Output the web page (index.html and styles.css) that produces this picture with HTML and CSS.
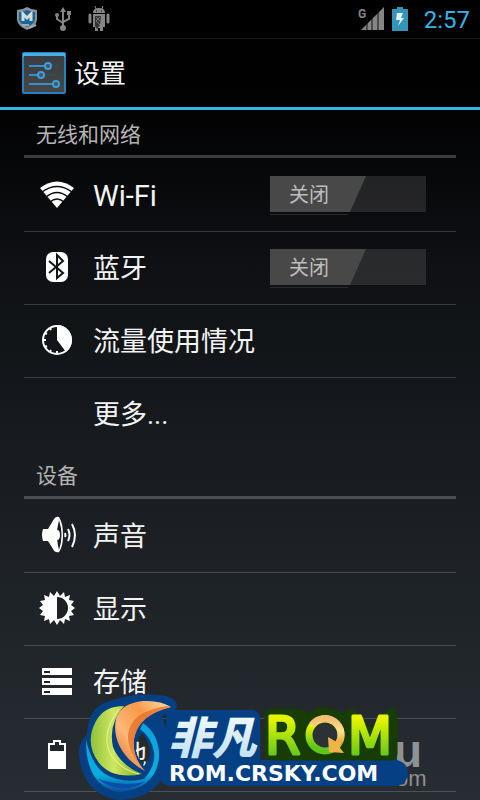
FILE: index.html
```html
<!DOCTYPE html>
<html lang="zh-CN">
<head>
<meta charset="utf-8">
<meta name="viewport" content="width=device-width, initial-scale=1">
<title>设置</title>
<link rel="stylesheet" href="styles.css">
</head>
<body>
<div class="screen">
  <div class="status">
    <div class="notices">
      <svg width="22" height="24" viewBox="0 0 22 24">
        <path d="M1 3Q6 3 11 0Q16 3 21 3V13Q20 19 11 23Q2 19 1 13Z" fill="#8d9296"/>
        <path d="M3 5Q7 5 11 3Q15 5 19 5V13Q18 17 11 20Q4 17 3 13Z" fill="#17669b"/>
        <path d="M7 14V7L11 11L15 7V14" fill="none" stroke="#d5dadd" stroke-width="3"/>
        <path d="M6 18H13M13 21L20 18" stroke="#a3a8ab" stroke-width="2"/>
      </svg>
      <svg width="16" height="24" viewBox="0 0 16 24" fill="none" stroke="#858585" stroke-width="2">
        <path d="M8 3V20M2 8V12L8 16M14 7V12L8 15"/>
        <path d="M5 5L8 0L11 5Z" fill="#858585" stroke="none"/>
        <circle cx="8" cy="21" r="3" fill="#858585" stroke="none"/>
        <circle cx="2" cy="8" r="2" fill="#858585" stroke="none"/>
        <path d="M12 4H16V8H12Z" fill="#858585" stroke="none"/>
      </svg>
      <svg width="22" height="26" viewBox="0 0 22 26">
        <path d="M5 7Q5 2 11 2T17 7ZM5 8H17V21H15V25H12V22H10V25H7V21H5Z" fill="#858585"/>
        <path d="M7 0L8 3M15 0L14 3" stroke="#858585"/>
        <path d="M2 9V16M20 9V16" stroke="#858585" stroke-width="3" stroke-linecap="round"/>
        <path d="M8 5H9M13 5H14" stroke="#111" stroke-width="1"/>
        <path d="M7 10H13L12 19L9 23L7 20Z" fill="#343434"/>
        <path d="M8 11L12 15M8 15L12 19M12 11L8 15" stroke="#777"/>
      </svg>
    </div>
    <div class="system">
      <svg width="26" height="24" viewBox="0 0 26 24">
        <path d="M3 23L26 0V23Z" fill="#858585"/>
        <path d="M9 10V24M14 6V24M20 0V24" stroke="#111"/>
        <text x="0" y="11" class="carrier">G</text>
      </svg>
      <svg width="16" height="24" viewBox="0 0 16 24">
        <path d="M0 2H5V0H11V2H16V24H0Z" fill="#3595b9"/>
        <path d="M5 6H11L9 11H12L6 19L8 13H4Z" fill="#e3f1f5"/>
      </svg>
      <time class="clock">2:57</time>
    </div>
  </div>

  <header class="bar">
    <svg width="44" height="42" viewBox="0 0 44 42">
      <defs><linearGradient id="tile" x2="0" y2="1"><stop stop-color="#3b3d3f"/><stop offset="1" stop-color="#474645"/></linearGradient></defs>
      <rect width="44" height="42" rx="2" fill="#287fbd"/>
      <path d="M1 1H43V5H1Z" fill="#44b0e8"/>
      <path d="M2 4H42V40H2Z" fill="url(#tile)"/>
      <path d="M7 14H24M7 23H17M7 32H32" stroke="#348fca" stroke-width="2"/>
      <path d="M29 14H36M22 23H36" stroke="#295574" stroke-width="1"/>
      <g fill="#45545f" stroke="#3ba0df" stroke-width="2"><circle cx="26" cy="14" r="3"/><circle cx="19" cy="23" r="3"/><circle cx="34" cy="32" r="3"/></g>
    </svg>
    <h1>设置</h1>
  </header>

  <main>
    <section>
      <h2>无线和网络</h2>
      <ul>
        <li>
          <svg class="icon" viewBox="0 0 36 36">
            <path d="M1 12Q18-1 35 12L18 32Z" fill="#fff"/>
            <path d="M3 16Q18 5 33 16M7 21Q18 12 29 21M11 26Q18 20 25 26" fill="none" stroke="#0a0b0d" stroke-width="1.5"/>
          </svg>
          <span class="label latin" id="wifi">Wi-Fi</span>
          <button class="switch" type="button" role="switch" aria-checked="false" aria-labelledby="wifi"><span>关闭</span></button>
        </li>
        <li>
          <svg class="icon" viewBox="0 0 36 36">
            <rect x="7" y="3" width="22" height="30" rx="7" fill="#fff"/>
            <path d="M10 12L24 24L18 29V6L24 12L10 24" fill="none" stroke="#121315" stroke-width="2"/>
          </svg>
          <span class="label" id="bt">蓝牙</span>
          <button class="switch" type="button" role="switch" aria-checked="false" aria-labelledby="bt"><span>关闭</span></button>
        </li>
        <li>
          <svg class="icon" viewBox="0 0 36 36">
            <circle cx="18" cy="18" r="14" fill="none" stroke="#fff" stroke-width="2"/>
            <path d="M18 18V3A15 15 0 0 1 27 30Z" fill="#fff"/>
            <path d="M4 18H7M18 29V32M11 6L12 8M11 30L12 28M6 11L8 12M6 25L8 24" stroke="#fff" stroke-width="2"/>
          </svg>
          <span class="label">流量使用情况</span>
        </li>
        <li>
          <span class="icon"></span>
          <span class="label">更多...</span>
        </li>
      </ul>
    </section>
    <section>
      <h2>设备</h2>
      <ul>
        <li>
          <svg class="icon" viewBox="0 0 36 36">
            <path d="M4 12H9L15 2Q17-1 20 0Q24 6 24 18T20 35Q16 36 14 32L9 24H4Q2 18 4 12Z" fill="#fff"/>
            <path d="M20 3Q16 18 20 33Q25 18 20 3Z" fill="#191d21"/>
            <path d="M18 13Q21 13 21 18T18 23Z" fill="#fff"/>
            <path d="M26 16Q27 18 26 20M29 12Q32 18 29 24M33 7Q39 18 33 30" fill="none" stroke="#fff" stroke-width="2"/>
          </svg>
          <span class="label">声音</span>
        </li>
        <li>
          <svg class="icon" viewBox="0 0 36 36">
            <path d="M18 1L21 6L25 2L26 7L31 5L30 10L35 11L32 15L36 18L32 21L35 25L30 26L31 31L26 29L25 34L21 30L18 35L15 30L11 34L10 29L5 31L6 26L1 25L4 21L0 18L4 15L1 11L6 10L5 5L10 7L11 2L15 6Z" fill="#fff"/>
            <path d="M18 7A11 11 0 0 1 18 29Z" fill="#1d2125"/>
          </svg>
          <span class="label">显示</span>
        </li>
        <li>
          <svg class="icon" viewBox="0 0 36 36">
            <path d="M3 5H33V12H3ZM3 15H33V22H3ZM3 25H33V32H3Z" fill="#fff"/>
            <path d="M5 9H11M5 19H11M5 29H11" stroke="#202428" stroke-width="2"/>
          </svg>
          <span class="label">存储</span>
        </li>
        <li>
          <svg class="icon" viewBox="0 0 36 36">
            <path d="M9 7H14V4H22V7H27V33H9Z" fill="#fff"/>
            <path d="M11 9H16V6H20V9H25V15H11Z" fill="#24282d"/>
          </svg>
          <span class="label">电池</span>
        </li>
      </ul>
    </section>
  </main>

  <svg class="brand" width="352" height="110" viewBox="78 690 352 110">
    <defs>
      <linearGradient id="lime" x1="0" x2="1"><stop stop-color="#8dc23c"/><stop offset=".45" stop-color="#d0e760"/><stop offset="1" stop-color="#7cad22"/></linearGradient>
      <linearGradient id="orange" x1="1" y1="0" x2="0" y2="1"><stop stop-color="#ffe0ac"/><stop offset=".35" stop-color="#f89a4b"/><stop offset=".65" stop-color="#fdb878"/><stop offset="1" stop-color="#df5c19"/></linearGradient>
      <linearGradient id="sea" x2="0" y2="1"><stop stop-color="#0da0dc"/><stop offset=".75" stop-color="#08aede"/><stop offset="1" stop-color="#074d9e"/></linearGradient>
      <linearGradient id="ice" x2="0" y2="1"><stop stop-color="#fff"/><stop offset="1" stop-color="#b9dcf4"/></linearGradient>
      <linearGradient id="leaf" x2="0" y2="1"><stop offset=".2" stop-color="#e5f600"/><stop offset=".85" stop-color="#62c51b"/></linearGradient>
      <linearGradient id="gold" x2="0" y2="1"><stop stop-color="#f4bd74"/><stop offset=".5" stop-color="#ffe092"/><stop offset="1" stop-color="#e9a12d"/></linearGradient>
    </defs>
    <text x="394" y="767" class="ghost-big">u</text>
    <text x="396" y="786" class="ghost">om</text>
    <path fill-rule="evenodd" d="M79 753Q79 742 87 734Q88 705 113 700Q140 691 166 696Q177 699 177 706Q175 713 162 716Q169 732 169 752Q166 798 120 800Q82 796 79 753ZM142 733Q151 743 150 756L144 766Q134 755 136 742Z" fill="#064084"/>
    <rect x="166" y="710" width="94" height="58" rx="8" fill="#064084"/>
    <path d="M143 723Q160 735 159 758Q155 790 118 792Q86 786 86 740Q92 765 105 774Q122 784 144 779Q156 766 154 752Q152 738 140 729Z" fill="url(#sea)"/>
    <path d="M98 779Q120 796 145 782Q122 787 98 779Z" fill="#0b4ca8"/>
    <path d="M124 706Q104 706 96 721Q84 743 99 763Q113 780 142 774Q120 765 113 747Q108 724 124 706Z" fill="url(#lime)"/>
    <path d="M119 709Q98 737 113 758Q124 771 139 774" fill="none" stroke="#ebf59d" stroke-width="1"/>
    <path d="M171 707Q160 700 143 701Q121 703 116 719Q113 733 120 747Q128 762 145 771Q132 757 134 739Q138 715 171 707Z" fill="url(#orange)"/>
    <path d="M167 706Q134 711 129 730Q124 747 143 769Q132 757 134 739Q138 715 170 707" fill="#e76f28" opacity=".75"/>
    <text x="168" y="754" class="name">非凡</text>
    <path d="M171 773H395" stroke="#064084" stroke-width="26" stroke-linecap="round"/>
    <path d="M271 715H298Q306 717 308 724Q315 714 325 714Q336 715 342 722L350 715L371 738L391 715V754H271Z" fill="#173c04" stroke="#173c04" stroke-width="13" stroke-linejoin="round"/>
    <circle cx="325" cy="735" r="16" fill="#2c3037" stroke="url(#leaf)" stroke-width="7"/>
    <path d="M312 725A16 16 0 0 1 338 744" fill="none" stroke="url(#gold)" stroke-width="7"/>
    <path d="M328 737L329 752L344 753L340 748L341 742L335 741Z" fill="#efb447"/>
    <text x="265" y="754" class="green">R</text>
    <text x="348" y="754" class="green">M</text>
    <text x="169" y="781" class="site">ROM.CRSKY.COM</text>
  </svg>
</div>
</body>
</html>
```
FILE: styles.css
```css
* {
  box-sizing: border-box;
}

body {
  margin: 0;
  background: #000;
  color: #f3f3f3;
  font-family: Roboto, "Noto Sans CJK SC", sans-serif;
}

svg {
  display: block;
  flex: none;
}

.screen {
  position: relative;
  min-height: 100vh;
  background: linear-gradient(#000 0, #020203 110px, #0e1013 260px, #1b1f23 520px, #282d33 100%);
}

.status {
  display: flex;
  align-items: center;
  justify-content: space-between;
  height: 39px;
  padding: 0 10px 0 16px;
  background: #000;
  border-bottom: 1px solid #181818;
}

.notices {
  display: flex;
  align-items: center;
  gap: 17px;
}

.system {
  display: flex;
  align-items: center;
  gap: 8px;
}

.carrier {
  font: bold 12px Roboto, sans-serif;
  fill: #858585;
}

.clock {
  margin-left: 8px;
  padding-top: 2px;
  color: #33b5e5;
  font-size: 24px;
  line-height: 36px;
}

.bar {
  display: flex;
  align-items: center;
  gap: 8px;
  height: 71px;
  padding: 0 22px;
  border-bottom: 3px solid #33b5e5;
}

h1 {
  margin: 0;
  padding-top: 2px;
  font-size: 26px;
  font-weight: 400;
  line-height: 38px;
}

section {
  margin: 0 24px;
}

h2 {
  height: 48px;
  margin: 0 0 1px;
  padding: 5px 12px 0;
  border-bottom: 3px solid rgba(255, 255, 255, 0.22);
  color: #b4b4b4;
  font-size: 21px;
  font-weight: 400;
  line-height: 40px;
}

ul {
  margin: 0;
  padding: 0;
  list-style: none;
}

li {
  display: flex;
  align-items: center;
  height: 73px;
  padding: 0 30px 2px 15px;
  border-bottom: 1px solid rgba(255, 255, 255, 0.18);
}

section:first-child li:last-child {
  border-bottom-color: transparent;
}

.icon {
  flex: none;
  width: 36px;
  height: 36px;
  margin-right: 18px;
  overflow: visible;
}

.label {
  flex: 1;
  padding-top: 4px;
  font-size: 27px;
  line-height: 40px;
}

.latin {
  font-size: 29px;
}

.switch {
  position: relative;
  width: 156px;
  height: 36px;
  padding: 0;
  border: 0;
  background: rgba(255, 255, 255, 0.11);
  color: #bdbdbd;
  font: 20px/38px Roboto, "Noto Sans CJK SC", sans-serif;
  text-align: left;
}

.switch span {
  display: block;
  width: 96px;
  height: 36px;
  padding-left: 19px;
  background: #484848;
  clip-path: polygon(0 0, 100% 0, 80px 100%, 0 100%);
}

.switch::after {
  content: "";
  position: absolute;
  top: 38px;
  left: 0;
  width: 78px;
  height: 1px;
  background: #292a2b;
}

.brand {
  position: absolute;
  bottom: 0;
  left: 78px;
}

.name {
  font: italic 900 44px "Noto Sans CJK SC", sans-serif;
  fill: url(#ice);
}

.green {
  font: 51px "DejaVu Sans", sans-serif;
  fill: url(#leaf);
  stroke: url(#leaf);
  stroke-width: 3px;
  stroke-linejoin: round;
}

.site {
  font: bold 22px "DejaVu Sans", sans-serif;
  fill: #fff;
}

.ghost-big {
  font: bold 46px "Liberation Sans", sans-serif;
  fill: #8e9195;
}

.ghost {
  font: 22px "Liberation Sans", sans-serif;
  fill: #8e9195;
}
```
